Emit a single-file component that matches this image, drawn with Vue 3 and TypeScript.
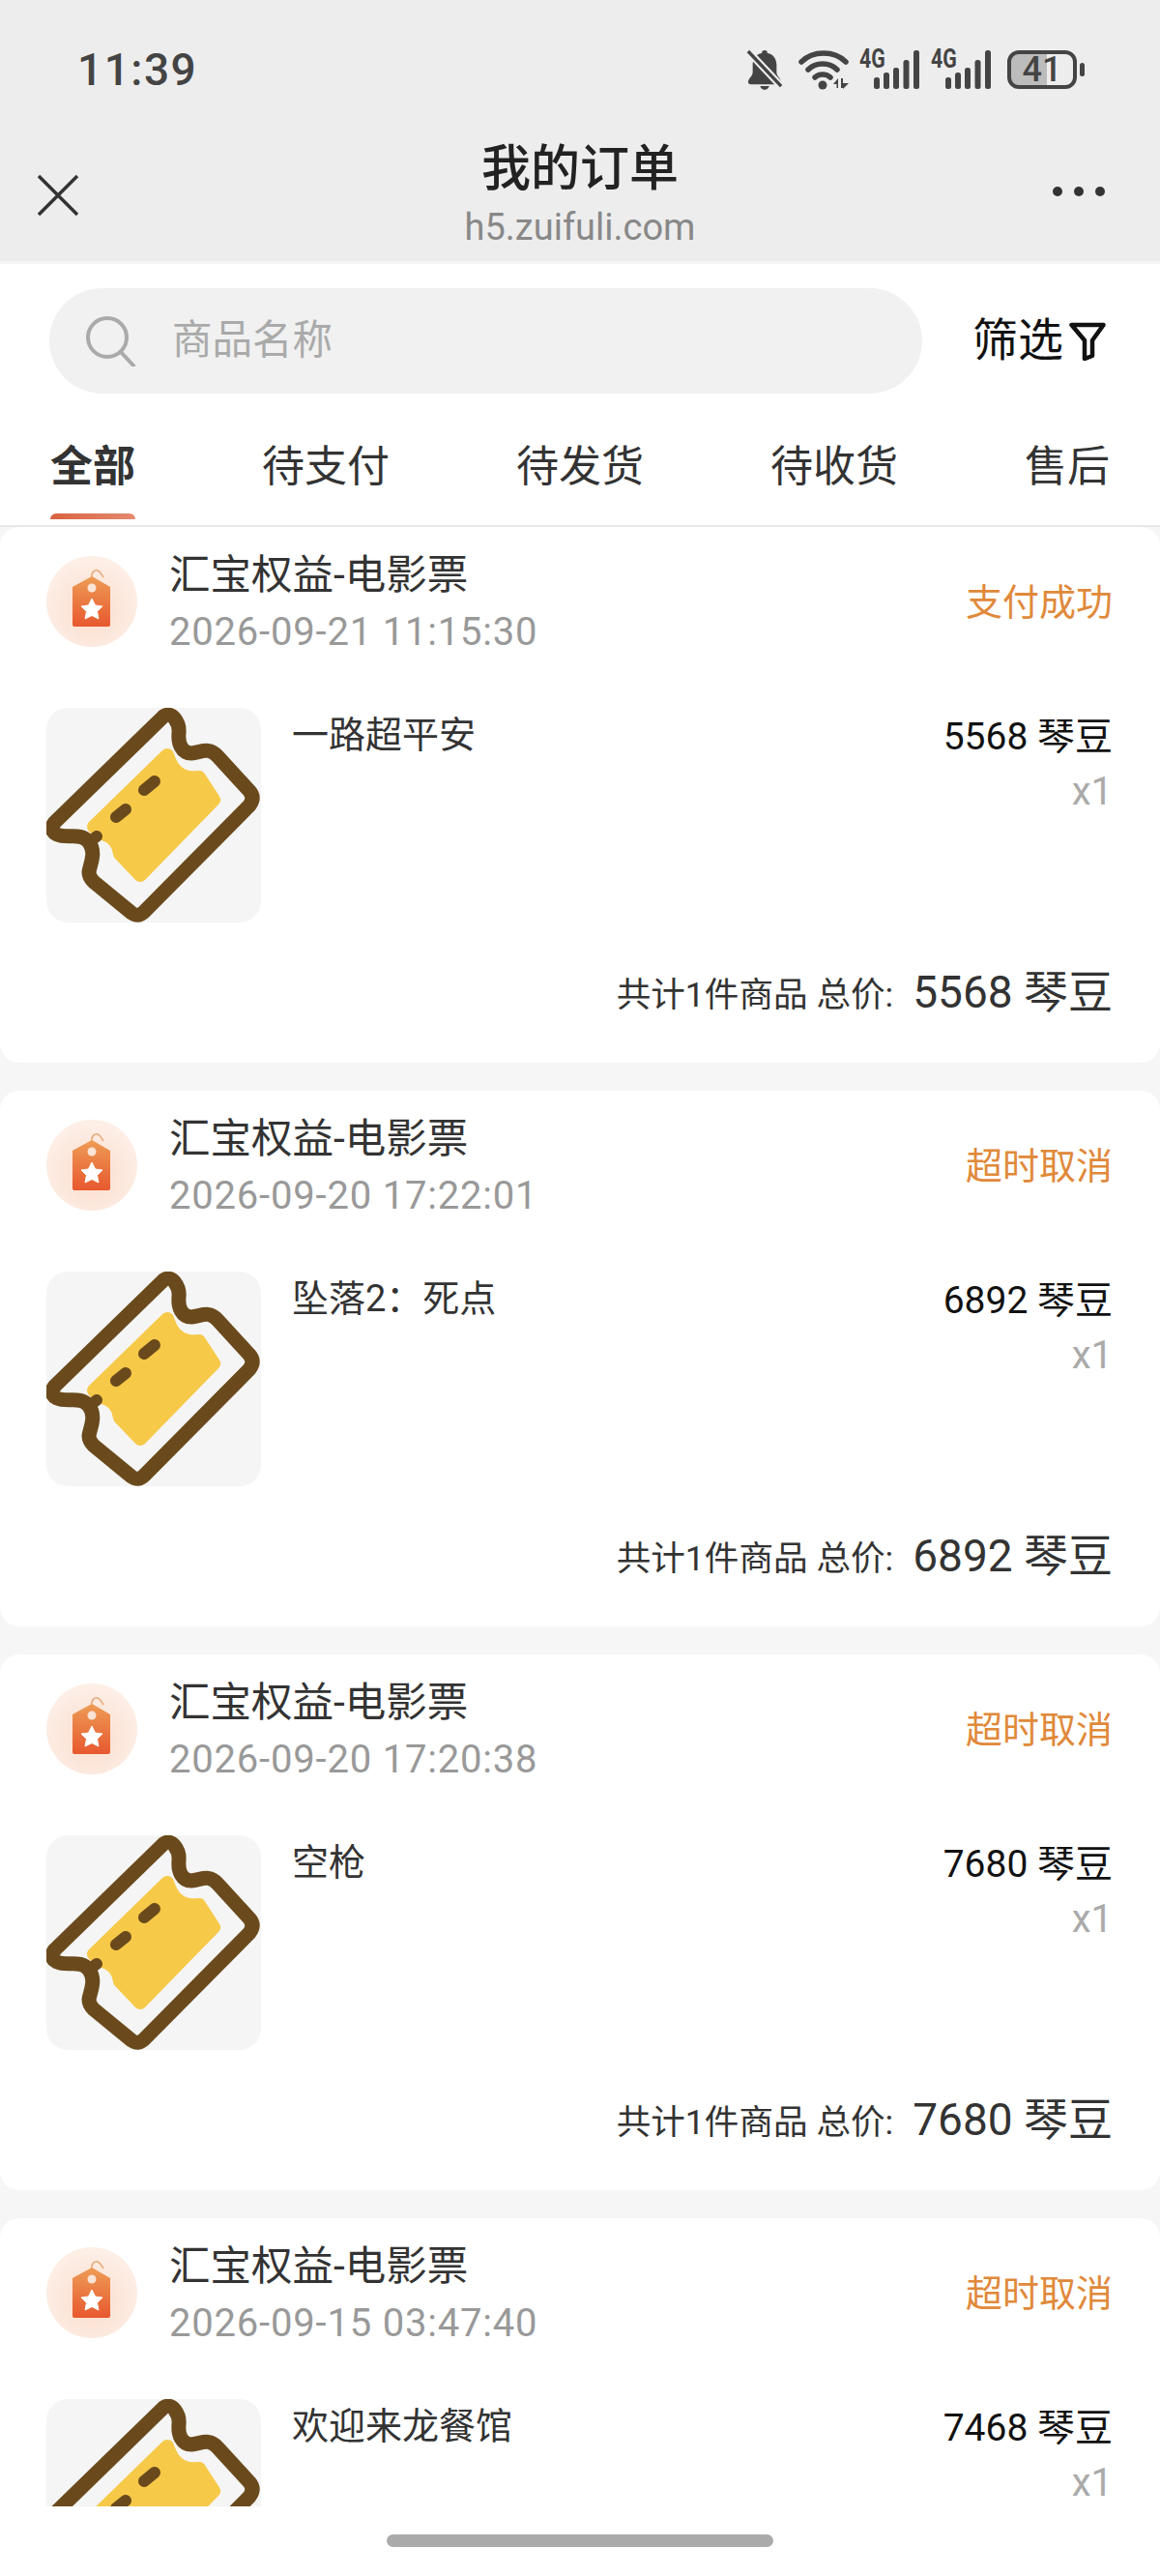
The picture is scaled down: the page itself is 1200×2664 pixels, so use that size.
<script setup lang="ts">
interface Order {
  status: string
  date: string
  name: string
  price: number
}

const tabs = ['全部', '待支付', '待发货', '待收货', '售后']

const orders: Order[] = [
  { status: '支付成功', date: '2026-09-21 11:15:30', name: '一路超平安', price: 5568 },
  { status: '超时取消', date: '2026-09-20 17:22:01', name: '坠落2：死点', price: 6892 },
  { status: '超时取消', date: '2026-09-20 17:20:38', name: '空枪', price: 7680 },
  { status: '超时取消', date: '2026-09-15 03:47:40', name: '欢迎来龙餐馆', price: 7468 },
]
</script>

<template>
  <div class="page">
    <header class="top">
      <div class="status-bar">
        <span class="time">11:39</span>
        <div class="status-icons">
          <svg class="bell" width="38" height="44" viewBox="0 0 40 44">
            <path d="M20 1c2 0 3 1 3 3 7 1 10 7 10 13v8c0 4 4 6 5 10 0 2-1 3-3 3H5c-2 0-3-1-3-3 1-4 5-6 5-10v-8C7 11 10 5 17 4c0-2 1-3 3-3z" fill="#444" />
            <path d="M15 40h10c-1 3-3 4-5 4s-4-1-5-4z" fill="#444" />
            <path d="M3 3l34 36" stroke="#ededed" stroke-width="8" />
            <path d="M2 2l36 38" stroke="#444" stroke-width="3.5" />
          </svg>
          <svg class="wifi" width="52" height="42" viewBox="0 0 52 42">
            <path d="M3 13C15 1 37 1 49 13" fill="none" stroke="#444" stroke-width="5.5" stroke-linecap="round" />
            <path d="M10 21C18 13 32 13 40 21" fill="none" stroke="#444" stroke-width="5.5" stroke-linecap="round" />
            <path d="M17 29C21 25 29 25 33 29" fill="none" stroke="#444" stroke-width="5.5" stroke-linecap="round" />
            <circle cx="25" cy="37" r="4.5" fill="#444" />
            <path d="M36 36l5-6v10h-1.500v-4zM46 35l6 0-6 6v-1h-0zM44 30h2v10h-2z" fill="#444" />
          </svg>
          <div v-for="n in 2" :key="n" class="signal">
            <span class="net">4G</span>
            <svg width="47" height="40" viewBox="0 0 47 40">
              <rect x="0" y="28" width="6" height="12" rx="2.500" fill="#444" />
              <rect x="10" y="23" width="6" height="17" rx="2.500" fill="#444" />
              <rect x="20" y="18" width="6" height="22" rx="2.500" fill="#444" />
              <rect x="30.500" y="10" width="6" height="30" rx="2.500" fill="#444" />
              <rect x="41" y="0" width="6" height="40" rx="2.500" fill="#444" />
            </svg>
          </div>
          <div class="battery">
            <div class="battery-body">41</div>
            <div class="battery-nub"></div>
          </div>
        </div>
      </div>
      <div class="nav">
        <div class="nav-side">
          <svg width="44" height="44" viewBox="0 0 44 44">
            <path d="M2 2l40 40M42 2L2 42" stroke="#333" stroke-width="3.500" fill="none" />
          </svg>
        </div>
        <div class="nav-title">
          <div class="title">我的订单</div>
          <div class="host">h5.zuifuli.com</div>
        </div>
        <div class="nav-side right">
          <div class="more"><i></i><i></i><i></i></div>
        </div>
      </div>
    </header>

    <div class="search-row">
      <div class="search">
        <svg width="52" height="52" viewBox="0 0 52 52">
          <circle cx="22" cy="22" r="20" fill="none" stroke="#aaa" stroke-width="4" />
          <path d="M36 37l13 14" stroke="#aaa" stroke-width="4" stroke-linecap="round" />
        </svg>
        <span class="placeholder">商品名称</span>
      </div>
      <div class="filter">
        <span class="filter-text">筛选</span>
        <svg width="38" height="40" viewBox="0 0 38 40">
          <path d="M2.500 3h33L24 19v16l-8 3V19z" fill="none" stroke="#111" stroke-width="4.500" stroke-linejoin="round" />
        </svg>
      </div>
    </div>

    <nav class="tabs">
      <div v-for="(tab, i) in tabs" :key="tab" class="tab" :class="{ active: i === 0 }">
        <span>{{ tab }}</span>
        <i class="bar"></i>
      </div>
    </nav>

    <main class="list">
      <section v-for="order in orders" :key="order.date" class="card">
        <div class="card-head">
          <div class="shop-icon">
            <svg width="94" height="94" viewBox="0 0 94 94">
              <defs>
                <linearGradient :id="'tag' + order.price" x1="0" y1="0" x2="0" y2="1">
                  <stop offset="0" stop-color="#ed9c55" />
                  <stop offset="1" stop-color="#e8582f" />
                </linearGradient>
              </defs>
              <path d="M47 23c-1-6 3-9 6-8s4 4 6 7" fill="none" stroke="#e9a876" stroke-width="1.500" />
              <path d="M47 21l19 11v39q0 2-2 2H29q-2 0-2-2V32z" :fill="'url(#tag' + order.price + ')'" />
              <circle cx="47" cy="33" r="4.500" fill="#fbe3d6" />
              <path d="M47 44l3.500 7 7.500 1-5.500 5.500 1.500 7.500-7-3.500-7 3.500 1.500-7.500-5.500-5.500 7.500-1z" fill="#fff" stroke="#fff" stroke-linejoin="round" />
            </svg>
          </div>
          <div class="head-text">
            <div class="shop">汇宝权益-电影票</div>
            <div class="date">{{ order.date }}</div>
          </div>
          <div class="state">{{ order.status }}</div>
        </div>

        <div class="card-body">
          <div class="thumb">
            <svg width="222" height="222" viewBox="0 0 222 222">
              <path d="M125 49L127 54Q135 75 158 72L173 95L97 173L76 151Q74 134 58 130L49 123z" fill="#f7c948" stroke="#f7c948" stroke-width="14" stroke-linejoin="round" />
              <path d="M101 85l11-9M72 113l10-8" stroke="#6a4a1c" stroke-width="12" stroke-linecap="round" />
              <path d="M121 9L9 118Q2 126 11 131C22 136 35 128 44 139C52 150 45 162 44 170Q44 175 49 180L88 212Q95 217 101 211L210 101Q216 93 210 86L177 50C168 40 160 46 150 47C140 47 136 37 137 26C138 16 130 2 121 9Z" fill="none" stroke="#6a4a1c" stroke-width="15" stroke-linejoin="round" />
              <path d="M44 139l8-6" stroke="#6a4a1c" stroke-width="12" stroke-linecap="round" />
            </svg>
          </div>
          <div class="name">{{ order.name }}</div>
          <div class="price-col">
            <div class="price">{{ order.price }} 琴豆</div>
            <div class="qty">x1</div>
          </div>
        </div>

        <div class="card-foot">
          <span class="count">共计1件商品 总价:</span>
          <span class="total">{{ order.price }} 琴豆</span>
        </div>
      </section>
    </main>

    <footer class="home"><i></i></footer>
  </div>
</template>

<style scoped>
.page {
  width: 1200px;
  height: 2664px;
  overflow: hidden;
  display: flex;
  flex-direction: column;
  background: #fff;
  font-family: Roboto, "Noto Sans CJK SC", sans-serif;
}

.top {
  height: 270px;
  background: #ededed;
  border-bottom: 3px solid #f5f5f5;
  box-sizing: content-box;
  flex: none;
}
.status-bar {
  height: 144px;
  display: flex;
  justify-content: space-between;
  align-items: center;
  padding: 0 78px 0 80px;
}
.time {
  font-size: 46px;
  font-weight: 500;
  color: #444;
  letter-spacing: 1.5px;
}
.status-icons {
  display: flex;
  align-items: center;
}
.wifi {
  margin-left: 16px;
}
.signal {
  position: relative;
  width: 62px;
  height: 40px;
  margin-left: 12px;
  display: flex;
  justify-content: flex-end;
}
.wifi + .signal {
  margin-left: 11px;
}
.net {
  position: absolute;
  left: 0;
  top: -8px;
  font-size: 28px;
  font-weight: 700;
  color: #444;
  transform: scaleX(0.76);
  transform-origin: left top;
}
.battery {
  display: flex;
  align-items: center;
  margin-left: 17px;
}
.battery-body {
  width: 72px;
  height: 40px;
  box-sizing: border-box;
  border: 4px solid #444;
  border-radius: 12px;
  background: linear-gradient(90deg, #bcbcbc 58%, transparent 58%);
  color: #444;
  font-size: 36px;
  font-weight: 500;
  line-height: 32px;
  text-align: center;
}
.battery-nub {
  width: 5px;
  height: 14px;
  margin-left: 3px;
  border-radius: 3px;
  background: #444;
}

.nav {
  height: 126px;
  display: flex;
  align-items: flex-start;
  padding: 0 57px 0 38px;
}
.nav-side {
  flex: 1;
  padding-top: 36px;
}
.nav-side.right {
  display: flex;
  justify-content: flex-end;
  padding-top: 49px;
}
.nav-title {
  text-align: center;
  margin-left: 19px;
}
.title {
  font-size: 51px;
  font-weight: 500;
  line-height: 62px;
  color: #222;
}
.host {
  font-size: 38px;
  line-height: 58px;
  color: #888;
}
.more {
  display: flex;
  gap: 12px;
}
.more i {
  width: 10px;
  height: 10px;
  border-radius: 50%;
  background: #333;
}

.search-row {
  flex: none;
  display: flex;
  align-items: center;
  justify-content: space-between;
  padding: 25px 56px 0 51px;
}
.search {
  width: 903px;
  height: 109px;
  border-radius: 55px;
  background: #f1f1f1;
  display: flex;
  align-items: center;
  padding-left: 38px;
  box-sizing: border-box;
  gap: 37px;
}
.placeholder {
  font-size: 41.500px;
  color: #aaa;
  padding-bottom: 10px;
}
.filter {
  display: flex;
  align-items: center;
  gap: 6px;
  font-size: 47px;
  color: #111;
}
.filter-text {
  padding-bottom: 10px;
}

.tabs {
  flex: none;
  height: 138px;
  box-sizing: border-box;
  border-bottom: 2px solid #e8e8e8;
  display: flex;
  justify-content: space-between;
  padding: 46px 52px 0;
}
.tab {
  display: flex;
  flex-direction: column;
  font-size: 44px;
  line-height: 60px;
  color: #333;
}
.tab.active {
  font-weight: 700;
}
.bar {
  height: 6px;
  margin-top: 18px;
  border-radius: 6px 6px 0 0;
}
.active .bar {
  background: linear-gradient(90deg, #d9623f, #e58a70);
}

.list {
  flex: 1;
  min-height: 0;
  overflow: hidden;
  background: #f6f6f6;
  display: flex;
  flex-direction: column;
  gap: 29px;
}
.card {
  flex: none;
  height: 554px;
  box-sizing: border-box;
  padding: 20px 49px 0 48px;
  background: #fff;
  border-radius: 20px;
}
.card-head {
  height: 114px;
  display: flex;
  align-items: center;
}
.shop-icon {
  width: 94px;
  height: 94px;
  border-radius: 50%;
  background: radial-gradient(circle at 50% 60%, #fbdccb, #fdeee6 70%);
  flex: none;
}
.head-text {
  flex: 1;
  margin-left: 33px;
  padding-top: 4px;
}
.shop {
  font-size: 42.500px;
  line-height: 60px;
  color: #333;
}
.date {
  font-size: 40px;
  letter-spacing: 0.8px;
  line-height: 58px;
  color: #999;
}
.state {
  font-size: 38px;
  color: #e0893a;
  padding-bottom: 6px;
}

.card-body {
  display: flex;
  margin-top: 53px;
  height: 222px;
}
.thumb {
  width: 222px;
  height: 222px;
  flex: none;
  border-radius: 22px;
  background: #f5f5f5;
}
.name {
  flex: 1;
  margin-left: 32px;
  font-size: 38px;
  line-height: 56px;
  color: #333;
}
.price-col {
  text-align: right;
}
.price {
  font-size: 39px;
  line-height: 60px;
  color: #111;
}
.qty {
  font-size: 40px;
  line-height: 54px;
  color: #aaa;
}

.card-foot {
  height: 62px;
  margin-top: 40px;
  display: flex;
  justify-content: flex-end;
  align-items: center;
  color: #333;
}
.count {
  font-size: 35.600px;
}
.total {
  font-size: 46px;
  margin-left: 20px;
  padding-bottom: 6px;
}

.home {
  flex: none;
  height: 72px;
  background: #fff;
  display: flex;
  justify-content: center;
  padding-top: 29px;
  box-sizing: border-box;
}
.home i {
  width: 400px;
  height: 13px;
  border-radius: 7px;
  background: #aaa;
}
</style>
